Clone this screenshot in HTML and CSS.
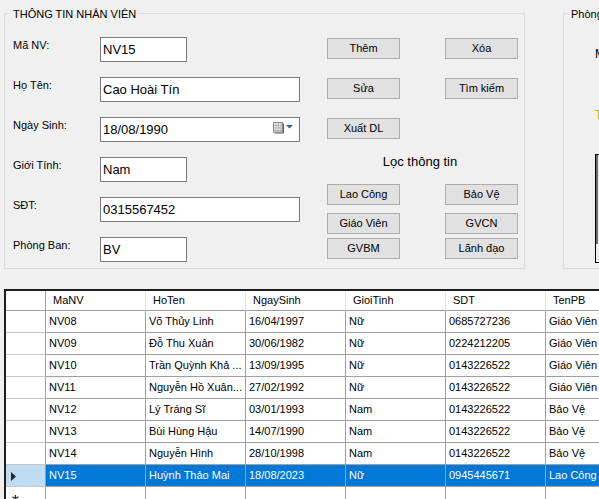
FILE: index.html
```html
<!DOCTYPE html>
<html lang="vi">
<head>
<meta charset="utf-8">
<title>Quản lý nhân viên</title>
<link rel="stylesheet" href="styles.css">
</head>
<body>
<div class="top">
  <fieldset class="group group-nv">
    <legend>THÔNG TIN NHÂN VIÊN</legend>
    <div class="gb-body nv-body">
      <div class="form">
        <div class="row"><span class="lbl">Mã NV:</span><div class="textbox short">NV15</div></div>
        <div class="row"><span class="lbl">Họ Tên:</span><div class="textbox long">Cao Hoài Tín</div></div>
        <div class="row"><span class="lbl">Ngày Sinh:</span>
          <div class="textbox long dtp"><span>18/08/1990</span>
            <svg class="cal-icon" width="22" height="12" viewBox="0 0 22 12">
              <rect x="1.5" y="0.5" width="9" height="9.5" fill="#eeeeee" stroke="#8c8c8c"/>
              <path d="M4 1v9M6.5 1v9M9 1v9M2 3.5h8M2 6h8M2 8.5h8" stroke="#b4b4b4" stroke-width="1"/>
              <path d="M11.5 1.5V11H2.5" fill="none" stroke="#5a5a5a"/>
              <polygon points="14,3 21,3 17.5,6.5" fill="#3d5c88"/>
            </svg>
          </div>
        </div>
        <div class="row"><span class="lbl">Giới Tính:</span><div class="textbox short">Nam</div></div>
        <div class="row"><span class="lbl">SĐT:</span><div class="textbox long">0315567452</div></div>
        <div class="row"><span class="lbl">Phòng Ban:</span><div class="textbox short">BV</div></div>
      </div>
      <div class="actions">
        <div class="btn-row"><button class="btn">Thêm</button><button class="btn">Xóa</button></div>
        <div class="btn-row spaced"><button class="btn">Sửa</button><button class="btn">Tìm kiếm</button></div>
        <div class="btn-row spaced"><button class="btn">Xuất DL</button></div>
        <div class="filter-title">Lọc thông tin</div>
        <div class="btn-row filter-first"><button class="btn">Lao Công</button><button class="btn">Bảo Vệ</button></div>
        <div class="btn-row filter-second"><button class="btn">Giáo Viên</button><button class="btn">GVCN</button></div>
        <div class="btn-row filter-third"><button class="btn">GVBM</button><button class="btn">Lãnh đạo</button></div>
      </div>
    </div>
  </fieldset>
  <fieldset class="group group-pb">
    <legend>Phòng Ban</legend>
    <div class="gb-body pb-body">
      <span class="pb-label pb-first">Mã PB:</span>
      <span class="pb-label pb-second">Tên PB:</span>
      <div class="pb-grid">
        <div class="pb-strip"></div>
        <div class="pb-area"><div class="pb-head"></div></div>
      </div>
    </div>
  </fieldset>
</div>

<div class="grid">
  <div class="gr head">
    <div class="hc corner"></div>
    <div class="hc">MaNV</div>
    <div class="hc">HoTen</div>
    <div class="hc">NgaySinh</div>
    <div class="hc">GioiTinh</div>
    <div class="hc">SDT</div>
    <div class="hc">TenPB</div>
  </div>
  <div class="gr"><div class="rh"></div><div class="c">NV08</div><div class="c">Võ Thủy Linh</div><div class="c">16/04/1997</div><div class="c">Nữ</div><div class="c">0685727236</div><div class="c">Giáo Viên</div></div>
  <div class="gr"><div class="rh"></div><div class="c">NV09</div><div class="c">Đỗ Thu Xuân</div><div class="c">30/06/1982</div><div class="c">Nữ</div><div class="c">0224212205</div><div class="c">Giáo Viên</div></div>
  <div class="gr"><div class="rh"></div><div class="c">NV10</div><div class="c">Trần Quỳnh Khả ...</div><div class="c">13/09/1995</div><div class="c">Nữ</div><div class="c">0143226522</div><div class="c">Giáo Viên</div></div>
  <div class="gr"><div class="rh"></div><div class="c">NV11</div><div class="c">Nguyễn Hồ Xuân...</div><div class="c">27/02/1992</div><div class="c">Nữ</div><div class="c">0143226522</div><div class="c">Giáo Viên</div></div>
  <div class="gr"><div class="rh"></div><div class="c">NV12</div><div class="c">Lý Tráng Sĩ</div><div class="c">03/01/1993</div><div class="c">Nam</div><div class="c">0143226522</div><div class="c">Bảo Vệ</div></div>
  <div class="gr"><div class="rh"></div><div class="c">NV13</div><div class="c">Bùi Hùng Hậu</div><div class="c">14/07/1990</div><div class="c">Nam</div><div class="c">0143226522</div><div class="c">Bảo Vệ</div></div>
  <div class="gr"><div class="rh"></div><div class="c">NV14</div><div class="c">Nguyễn Hình</div><div class="c">28/10/1998</div><div class="c">Nam</div><div class="c">0143226522</div><div class="c">Bảo Vệ</div></div>
  <div class="gr sel"><div class="rh"><svg width="6" height="9" viewBox="0 0 6 9"><polygon points="0,0 5,4.5 0,9" fill="#2a2a2a"/></svg></div><div class="c">NV15</div><div class="c">Huỳnh Thảo Mai</div><div class="c">18/08/2023</div><div class="c">Nữ</div><div class="c">0945445671</div><div class="c">Lao Công</div></div>
  <div class="gr newrow"><div class="rh"><svg width="7" height="7" viewBox="0 0 7 7"><path d="M3.5 0v7M0.5 1.8l6 3.4M0.5 5.2l6-3.4" stroke="#2a2a2a" stroke-width="1.2"/></svg></div><div class="c"></div><div class="c"></div><div class="c"></div><div class="c"></div><div class="c"></div><div class="c"></div></div>
</div>
</body>
</html>
```

FILE: styles.css
```css
* { box-sizing: border-box; }

html, body {
  margin: 0;
  padding: 0;
}

body {
  width: 599px;
  height: 499px;
  overflow: hidden;
  background: #f0f0f0;
  font-family: "Liberation Sans", Arial, sans-serif;
  font-size: 11px;
  color: #000;
}

.top {
  display: flex;
  align-items: flex-start;
  gap: 38px;
  padding-left: 4px;
  height: 289px;
}

.group {
  margin: 6px 0 0 0;
  border: 1px solid #dcdcdc;
  padding: 16px 0 0 6px;
  min-width: 0;
  flex: none;
}

.group legend {
  font-size: 11px;
  line-height: 13px;
  padding: 2px 2px 0 2px;
  color: #000;
}

.group-nv { width: 521px; }
.group-pb { width: 300px; padding-left: 5px; }

.gb-body {
  height: 231px;
}

.nv-body {
  display: flex;
  padding-left: 2px;
}

.form {
  display: flex;
  flex-direction: column;
  gap: 15px;
  width: 287px;
  flex: none;
}

.row {
  display: flex;
  height: 25px;
}

.lbl {
  width: 87px;
  flex: none;
  padding-top: 2px;
  line-height: 13px;
}

.textbox {
  height: 25px;
  background: #fff;
  border: 1px solid #7a7a7a;
  font-size: 13px;
  line-height: 23px;
  padding-left: 2px;
  white-space: nowrap;
}

.short { width: 87px; }
.long { width: 200px; }

.dtp {
  display: flex;
  justify-content: space-between;
}

.cal-icon {
  margin-top: 4px;
  margin-right: 5px;
  flex: none;
}

.actions {
  margin-left: 27px;
  width: 191px;
  display: flex;
  flex-direction: column;
  padding-top: 1px;
}

.btn-row {
  display: flex;
  gap: 45px;
}

.btn-row.spaced { margin-top: 19px; }
.btn-row.filter-first { margin-top: 15px; }
.btn-row.filter-second { margin-top: 8px; }
.btn-row.filter-third { margin-top: 4px; }

.btn {
  width: 73px;
  height: 21px;
  padding: 0;
  margin: 0;
  background: #e1e1e1;
  border: 1px solid #adadad;
  border-radius: 0;
  font-family: "Liberation Sans", Arial, sans-serif;
  font-size: 11px;
  line-height: 19px;
  color: #000;
  flex: none;
}

.filter-title {
  margin-top: 15px;
  font-size: 13px;
  line-height: 15px;
  text-align: center;
  padding-right: 5px;
}

.pb-body {
  display: flex;
  flex-direction: column;
  align-items: flex-start;
  padding-left: 26px;
}

.pb-label {
  font-size: 12px;
  line-height: 14px;
  white-space: nowrap;
}

.pb-first { margin-top: 10px; }
.pb-second { margin-top: 47px; color: #c9b100; }

.pb-grid {
  margin-top: 32px;
  width: 60px;
  height: 109px;
  border: 1px solid #000;
  border-right: none;
  display: flex;
  align-items: flex-start;
  background: #f0f0f0;
}

.pb-strip {
  width: 2px;
  height: 89px;
  background: #6d6d6d;
  flex: none;
}

.pb-area {
  flex: 1;
  height: 89px;
  background: #f0f0f0;
}

.pb-head {
  height: 21px;
  border-bottom: 1px solid #c8c8c8;
}

/* Data grid */
.grid {
  margin-left: 4px;
  width: 800px;
  border-top: 2px solid #1e1e1e;
  border-left: 2px solid #1e1e1e;
  background: #fff;
}

.gr {
  display: grid;
  grid-template-columns: 40px repeat(6, 100px);
}

.hc {
  height: 20px;
  border-right: 1px solid #e5e5e5;
  border-bottom: 1px solid #a0a0a0;
  padding-left: 7px;
  line-height: 19px;
  white-space: nowrap;
  overflow: hidden;
  background: #fff;
}

.hc.corner { border-right-color: #a0a0a0; }

.rh {
  height: 22px;
  border-right: 1px solid #a0a0a0;
  border-bottom: 1px solid #c8c8c8;
  background: #fff;
  display: flex;
  align-items: center;
  padding-left: 5px;
}

.c {
  height: 22px;
  border-right: 1px solid #a0a0a0;
  border-bottom: 1px solid #a0a0a0;
  padding-left: 3px;
  line-height: 21px;
  white-space: nowrap;
  overflow: hidden;
  background: #fff;
}

.sel .c {
  background: #0078d7;
  color: #fff;
}

.sel .rh {
  background: #c0dcf3;
  padding-top: 1px;
}

.newrow .rh {
  align-items: flex-start;
  padding-top: 8px;
  padding-left: 6px;
}
```
